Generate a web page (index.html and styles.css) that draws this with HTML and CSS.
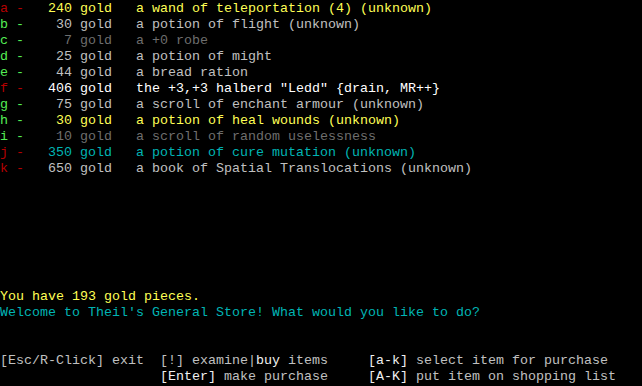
FILE: index.html
```html
<!DOCTYPE html>
<html lang="en">
  <head>
    <meta charset="UTF-8" />
    <title>Theil's General Store</title>
    <link rel="stylesheet" href="styles.css">
  </head>
  <body>
    <div class="screen">
      <!-- 상점 물품 목록 -->
      <div class="items">
        <div class="line"><span class="red">a -</span>  <span class="yellow"> 240 gold   a wand of teleportation (4) (unknown)</span></div>
        <div class="line"><span class="green">b -</span>  <span class="gray">  30 gold   a potion of flight (unknown)</span></div>
        <div class="line"><span class="green">c -</span>  <span class="dark">   7 gold   a +0 robe</span></div>
        <div class="line"><span class="green">d -</span>  <span class="gray">  25 gold   a potion of might</span></div>
        <div class="line"><span class="green">e -</span>  <span class="gray">  44 gold   a bread ration</span></div>
        <div class="line"><span class="red">f -</span>  <span class="white"> 406 gold   the +3,+3 halberd "Ledd" {drain, MR++}</span></div>
        <div class="line"><span class="green">g -</span>  <span class="gray">  75 gold   a scroll of enchant armour (unknown)</span></div>
        <div class="line"><span class="green">h -</span>  <span class="yellow">  30 gold   a potion of heal wounds (unknown)</span></div>
        <div class="line"><span class="green">i -</span>  <span class="dark">  10 gold   a scroll of random uselessness</span></div>
        <div class="line"><span class="red">j -</span>  <span class="cyan"> 350 gold   a potion of cure mutation (unknown)</span></div>
        <div class="line"><span class="red">k -</span>  <span class="gray"> 650 gold   a book of Spatial Translocations (unknown)</span></div>
      </div>

      <!-- 메시지 -->
      <div class="messages">
        <div class="line yellow">You have 193 gold pieces.</div>
        <div class="line cyan">Welcome to Theil's General Store! What would you like to do?</div>
      </div>

      <!-- 명령어 안내 -->
      <div class="commands">
        <div class="line gray">[Esc/R-Click] exit  [!] examine|<span class="hl">buy</span> items     <span class="hl">[a-k]</span> select item for purchase</div>
        <div class="line gray">                    <span class="hl">[Enter]</span> make purchase     <span class="hl">[A-K]</span> put item on shopping list</div>
      </div>
    </div>
  </body>
</html>
```

FILE: styles.css
```css
/* 터미널 화면 */
body {
  margin: 0;
  padding: 0;
  background-color: #000;
  font-family: "Liberation Mono", "Courier New", monospace;
  font-size: 13.3333px;
  color: #c0c0c0;
}

.screen {
  display: flex;
  flex-direction: column;
  width: 642px;
  height: 384px;
}

.line {
  height: 16px;
  line-height: 17px;
  white-space: pre;
}

.messages {
  margin-top: auto;
}

.commands {
  margin-top: 32px;
}

/* 색상 */
.red {
  color: #b40000;
}

.green {
  color: #55ee55;
}

.yellow {
  color: #ffff55;
}

.gray {
  color: #c0c0c0;
}

.dark {
  color: #6e6e6e;
}

.white {
  color: #ffffff;
}

.cyan {
  color: #00b4b4;
}

.hl {
  color: #f0f0f0;
}
```
